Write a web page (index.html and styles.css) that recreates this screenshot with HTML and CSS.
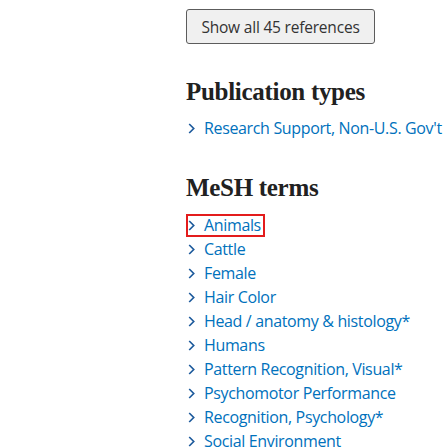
FILE: index.html
```html
<!DOCTYPE html>
<html>
<head>
<meta charset="utf-8">
<link rel="stylesheet" href="styles.css">
</head>
<body>
<div class="page">
  <div class="refs">
    <button class="show-all">Show all 45 references</button>
  </div>
  <section class="block pubtypes">
    <h2 class="heading">Publication types</h2>
    <ul class="terms">
      <li><a class="term" href="#"><svg class="chev" viewBox="0 0 7 11"><path d="M1.2 1l4.5 4.5-4.5 4.5"/></svg>Research Support, Non-U.S. Gov't</a></li>
    </ul>
  </section>
  <section class="block mesh">
    <h2 class="heading">MeSH terms</h2>
    <ul class="terms">
      <li><a class="term focused" href="#"><svg class="chev" viewBox="0 0 7 11"><path d="M1.2 1l4.5 4.5-4.5 4.5"/></svg>Animals</a></li>
      <li><a class="term" href="#"><svg class="chev" viewBox="0 0 7 11"><path d="M1.2 1l4.5 4.5-4.5 4.5"/></svg>Cattle</a></li>
      <li><a class="term" href="#"><svg class="chev" viewBox="0 0 7 11"><path d="M1.2 1l4.5 4.5-4.5 4.5"/></svg>Female</a></li>
      <li><a class="term" href="#"><svg class="chev" viewBox="0 0 7 11"><path d="M1.2 1l4.5 4.5-4.5 4.5"/></svg>Hair Color</a></li>
      <li><a class="term" href="#"><svg class="chev" viewBox="0 0 7 11"><path d="M1.2 1l4.5 4.5-4.5 4.5"/></svg>Head / anatomy &amp; histology*</a></li>
      <li><a class="term" href="#"><svg class="chev" viewBox="0 0 7 11"><path d="M1.2 1l4.5 4.5-4.5 4.5"/></svg>Humans</a></li>
      <li><a class="term" href="#"><svg class="chev" viewBox="0 0 7 11"><path d="M1.2 1l4.5 4.5-4.5 4.5"/></svg>Pattern Recognition, Visual*</a></li>
      <li><a class="term" href="#"><svg class="chev" viewBox="0 0 7 11"><path d="M1.2 1l4.5 4.5-4.5 4.5"/></svg>Psychomotor Performance</a></li>
      <li><a class="term" href="#"><svg class="chev" viewBox="0 0 7 11"><path d="M1.2 1l4.5 4.5-4.5 4.5"/></svg>Recognition, Psychology*</a></li>
      <li><a class="term" href="#"><svg class="chev" viewBox="0 0 7 11"><path d="M1.2 1l4.5 4.5-4.5 4.5"/></svg>Social Environment</a></li>
    </ul>
  </section>
</div>
</body>
</html>
```
FILE: styles.css
```css
html, body {
  margin: 0;
  padding: 0;
  background: #ffffff;
}
.page {
  padding-left: 186px;
  padding-top: 9px;
  font-family: "Open Sans", "Noto Sans", sans-serif;
}
.show-all {
  display: block;
  width: 189px;
  height: 35px;
  margin: 0;
  padding: 0;
  border: 1px solid #5c5c5c;
  border-radius: 3px;
  background: #f0f0f0;
  color: #333333;
  font-family: "Open Sans", "Noto Sans", sans-serif;
  font-size: 15.5px;
  letter-spacing: -0.2px;
}
.heading {
  margin: 0;
  font-family: "Liberation Serif", serif;
  font-weight: bold;
  font-size: 25px;
  letter-spacing: -0.3px;
  line-height: 30px;
  color: #212121;
}
.pubtypes {
  margin-top: 33px;
}
.mesh {
  margin-top: 33px;
}
.terms {
  list-style: none;
  margin: 9px 0 0 0;
  padding: 0;
}
.mesh .terms {
  margin-top: 10px;
}
.terms li {
  height: 24px;
  display: flex;
  align-items: center;
  padding-left: 2px;
}
.term {
  display: inline-flex;
  align-items: center;
  gap: 9px;
  color: #0071bc;
  text-decoration: none;
  font-size: 16px;
  letter-spacing: -0.35px;
  line-height: 19px;
}
.chev {
  width: 7px;
  height: 11px;
  fill: none;
  stroke: #1d5a9c;
  stroke-width: 1.7;
}
.focused {
  outline: 2px solid #e31c1c;
  outline-offset: 0;
  padding-right: 2px;
}
```
